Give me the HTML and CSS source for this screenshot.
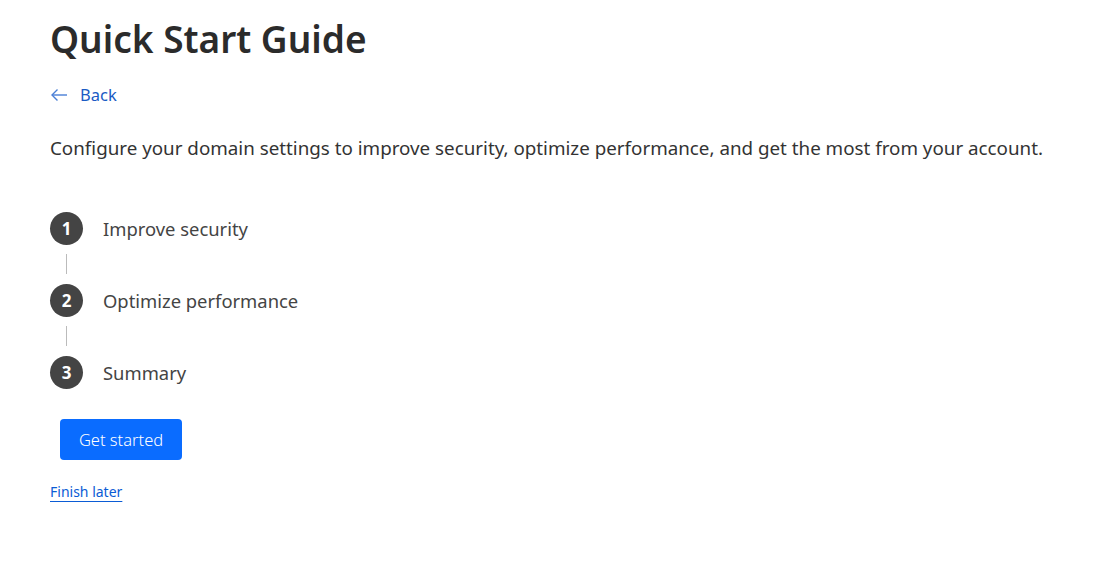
FILE: index.html
```html
<!DOCTYPE html>
<html lang="en">
<head>
    <meta name="viewport" content="width=device-width, initial-scale=1.0">
    <title>Quick Start Guide</title>
    <link rel="stylesheet" href="styles.css">
</head>
<body>
    <div class="page">
        <h1>Quick Start Guide</h1>

        <a class="back-link" href="#">
            <svg width="18" height="14" viewBox="0 0 18 14" fill="none" stroke="currentColor" stroke-width="1.4">
                <path d="M17 7H2"/>
                <path d="M7.5 1.5L2 7l5.5 5.5"/>
            </svg>
            <span>Back</span>
        </a>

        <p class="intro">Configure your domain settings to improve security, optimize performance, and get the most from your account.</p>

        <ol class="steps">
            <li class="step">
                <span class="num">1</span>
                <span class="label">Improve security</span>
            </li>
            <li class="line"></li>
            <li class="step">
                <span class="num">2</span>
                <span class="label">Optimize performance</span>
            </li>
            <li class="line"></li>
            <li class="step">
                <span class="num">3</span>
                <span class="label">Summary</span>
            </li>
        </ol>

        <div class="btn-container">
            <button class="btn">Get started</button>
        </div>

        <a class="finish" href="#">Finish later</a>
    </div>
</body>
</html>
```

FILE: styles.css
```css
* {
    margin: 0;
    padding: 0;
    box-sizing: border-box;
    font-family: "Noto Sans", "Open Sans", sans-serif;
}

body {
    background-color: #fff;
    color: #333;
}

.page {
    padding: 14px 50px;
}

h1 {
    font-size: 37px;
    font-weight: 600;
    color: #2b2b2b;
    line-height: 50px;
}

.back-link {
    display: inline-flex;
    align-items: center;
    gap: 12px;
    margin-top: 19px;
    color: #1a5bc4;
    text-decoration: none;
    font-size: 16.5px;
}

.back-link svg {
    color: #4a7fd6;
}

.intro {
    margin-top: 28px;
    font-size: 18.8px;
    color: #333;
}

.steps {
    list-style: none;
    margin-top: 51px;
}

.step {
    display: flex;
    align-items: center;
    gap: 20px;
}

.num {
    width: 33px;
    height: 33px;
    border-radius: 50%;
    background: #444;
    color: #fff;
    font-weight: 700;
    font-size: 17px;
    display: flex;
    align-items: center;
    justify-content: center;
}

.label {
    font-size: 18.4px;
    color: #444;
}

.line {
    width: 1px;
    height: 20px;
    margin: 9px 0 10px 16px;
    background: #bbb;
}

.btn-container {
    margin-top: 30px;
    padding-left: 10px;
}

.btn {
    background: #0a6cff;
    color: #fff;
    border: none;
    border-radius: 4px;
    width: 122px;
    height: 41px;
    font-size: 16.5px;
    font-weight: 300;
    cursor: pointer;
}

.finish {
    display: inline-block;
    margin-top: 22px;
    font-size: 14px;
    color: #0b5cd5;
    text-decoration: underline;
    text-underline-offset: 4px;
}
```
